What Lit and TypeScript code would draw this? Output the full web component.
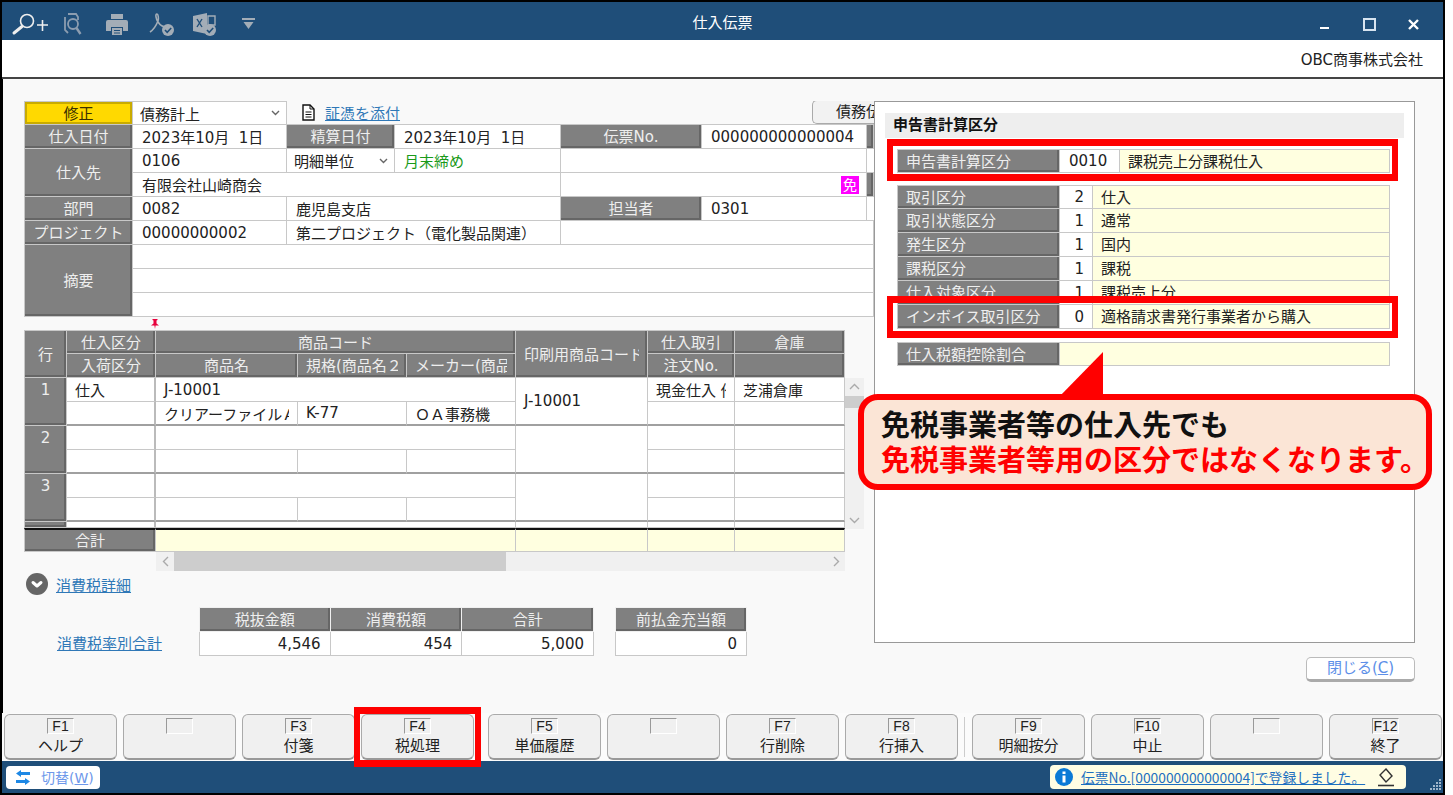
import { html, css, LitElement, svg } from 'lit';
import { customElement } from 'lit/decorators.js';

const fnKeys = [
  [{ k: 'F1', t: 'ヘルプ' }, { k: '', t: '' }, { k: 'F3', t: '付箋' }, { k: 'F4', t: '税処理' }],
  [{ k: 'F5', t: '単価履歴' }, { k: '', t: '' }, { k: 'F7', t: '行削除' }, { k: 'F8', t: '行挿入' }],
  [{ k: 'F9', t: '明細按分' }, { k: 'F10', t: '中止' }, { k: '', t: '' }, { k: 'F12', t: '終了' }],
];

const chevron = html`<svg class="chev" width="9" height="6" viewBox="0 0 9 6"><path d="M1 1l3.500 3.500L8 1" fill="none" stroke="#666" stroke-width="1.400"/></svg>`;

const checkBadge = (cx: number, cy: number) => svg`
  <circle cx=${cx} cy=${cy} r="6" fill="#a3adb7"/>
  <path d="M${cx - 3} ${cy}l2.200 2.400 4-4.400" fill="none" stroke="#1f4e79" stroke-width="1.600"/>`;

@customElement('app-root')
export class AppRoot extends LitElement {
  static styles = css`
    :host {
      display: block;
      position: relative;
      width: 1445px;
      height: 795px;
      font-family: 'DejaVu Sans', 'Noto Sans CJK JP', sans-serif;
      font-size: 15px;
      color: #222;
    }
    * { box-sizing: border-box; }

    .frame {
      height: 795px;
      border: 2px solid #000;
      display: flex;
      flex-direction: column;
      background: #000;
    }
    .title {
      height: 38px;
      flex: none;
      background: #1f4e79;
      color: #fff;
      display: grid;
      grid-template-columns: 1fr auto 1fr;
      align-items: center;
      font-family: 'Noto Sans CJK JP', sans-serif;
    }
    .title svg { display: block; }
    .tools { justify-self: start; }
    .controls { justify-self: end; }
    .company {
      height: 39px;
      flex: none;
      background: #fff;
      border-bottom: 2px solid #444;
      display: flex;
      align-items: center;
      justify-content: flex-end;
      padding-right: 20px;
    }
    .main {
      height: 634px;
      flex: none;
      background: #f9f9f9;
      border-left: 1px solid #000;
      padding: 22px 0 0 21px;
      display: flex;
    }
    .left {
      width: 850px;
      flex: none;
      overflow: hidden;
    }
    .right {
      width: 541px;
      flex: none;
      display: flex;
      flex-direction: column;
    }

    /* shared cells */
    .cell, .lb {
      display: flex;
      align-items: center;
      min-width: 0;
      overflow: hidden;
      border-right: 1px solid #c8c8c8;
      border-bottom: 1px solid #c8c8c8;
    }
    .cell { background: #fff; padding-left: 9px; white-space: pre; }
    .lb {
      background: #808080;
      color: #eee;
      justify-content: center;
      white-space: nowrap;
      padding-bottom: 2px;
      box-shadow: inset -2px -2px 0 #666;
    }
    .l { border-left: 1px solid #c8c8c8; }
    .t { border-top: 1px solid #c8c8c8; }
    .r2 { grid-row: span 2; }
    .r3 { grid-row: span 3; }
    .s2 { grid-column: span 2; }
    .s3 { grid-column: span 3; }
    .s6 { grid-column: span 6; }
    .yellow {
      background: #ffd900;
      color: #3a3000;
      box-shadow: inset 2px 2px 0 #c9ab00, inset -2px -2px 0 #c9ab00;
    }
    .sel { justify-content: space-between; padding: 0 6px 0 7px; }
    .green { color: #1a9a1a; }
    .chev { flex: none; }
    a { color: #2f78b7; text-decoration: underline; }

    /* header form */
    .form {
      display: grid;
      grid-template-columns: 109px 154px 108px 166px 141px 165px 7px;
      grid-auto-rows: 24px;
    }
    .top {
      grid-column: 3 / -1;
      display: flex;
      align-items: center;
      padding-left: 15px;
      gap: 10px;
      border-bottom: 1px solid #c8c8c8;
    }
    .side-btn {
      flex: none;
      width: 62px;
      height: 24px;
      margin-left: auto;
      margin-top: -1px;
      padding-left: 23px;
      background: #f2f2f2;
      border: 1px solid #aaa;
      border-right: 0;
      border-radius: 5px 0 0 5px;
      white-space: nowrap;
      overflow: hidden;
      line-height: 22px;
    }
    .end { justify-content: flex-end; padding-right: 7px; }
    .menzei {
      width: 18px;
      height: 18px;
      background: #ff00ff;
      color: #fff;
      font-size: 14px;
      line-height: 18px;
      text-align: center;
    }

    /* detail table */
    .pin { height: 13px; padding: 2px 0 0 127px; }
    .pin svg { display: block; }
    .table-wrap { display: flex; }
    .table {
      width: 821px;
      display: grid;
      grid-template-columns: 43px 89px 142px 109px 109px 132px 87px 110px;
      grid-template-rows: repeat(8, 24px) 6px 24px;
    }
    .table .lb.tp { align-items: flex-start; padding-top: 3px; }
    .table .cell { padding-left: 8px; }
    .table .cut { padding: 0 8px; justify-content: flex-start; }
    .table .lb.cut { padding-bottom: 2px; }
    .cut > span { display: block; flex: 1; min-width: 0; overflow: hidden; }
    .gb { border-bottom: 2px solid #a0a0a0; }
    .thick { border-right: 2px solid #bbb; }
    .total { border-top: 2px solid #111; background: #ffffe0; }
    .lb.total { background: #808080; }
    .vs {
      width: 19px;
      height: 151px;
      margin-top: 48px;
      background: #f0f0f0;
      display: flex;
      flex-direction: column;
      align-items: center;
      justify-content: space-between;
      padding: 5px 0;
    }
    .vs-thumb { width: 19px; height: 12px; background: #cdcdcd; margin-top: 6px; margin-bottom: auto; }
    .hs {
      margin-left: 132px;
      width: 689px;
      height: 19px;
      background: #f0f0f0;
      display: flex;
      align-items: center;
    }
    .hs-arrow { width: 18px; flex: none; display: flex; justify-content: center; }
    .hs-thumb { width: 332px; height: 19px; background: #cdcdcd; flex: none; }
    .hs-arrow.end-a { margin-left: auto; }

    /* tax */
    .tax-head { display: flex; align-items: center; height: 22px; margin: 2px 0 0 2px; gap: 8px; }
    .tax-row { display: flex; margin-top: 12px; padding-left: 33px; }
    .tax-link { width: 142px; align-self: flex-end; height: 24px; line-height: 24px; }
    .tax-a, .tax-b { display: grid; grid-template-rows: 25px 24px; }
    .tax-a { width: 395px; grid-template-columns: repeat(3, 1fr); }
    .tax-b { width: 132px; margin-left: 21px; }
    .num { justify-content: flex-end; padding-right: 9px; }
    .tax-row .lb { border-color: #f0f0f0; }

    /* tax panel */
    .panel {
      height: 542px;
      background: #fff;
      border: 1px solid #999;
      padding: 11px 10px 0;
    }
    .panel-head {
      height: 25px;
      background: #eee;
      font-weight: bold;
      color: #111;
      line-height: 25px;
      padding-left: 8px;
    }
    .prow {
      width: 493px;
      margin-left: 12px;
      display: grid;
      grid-template-rows: 24px;
    }
    .prow.wide { grid-template-columns: 163px 60px 1fr; margin-top: 11px; }
    .prow.narrow { grid-template-columns: 163px 33px 1fr; }
    .prow.only { grid-template-columns: 163px 1fr; margin-top: 13px; }
    .group { margin-top: 12px; }
    .prow .lb { justify-content: flex-start; padding-left: 8px; }
    .prow .cell.code { justify-content: flex-end; padding: 0 8px 0 0; }
    .cream { background: #ffffe0; padding-left: 8px; padding-bottom: 2px; }
    .close {
      align-self: flex-end;
      width: 109px;
      height: 25px;
      margin-top: 14px;
      background: #fff;
      border: 1px solid #bbb;
      border-bottom: 3px solid #aaa;
      border-radius: 5px;
      color: #5d8fe8;
      text-align: center;
      line-height: 21px;
    }
    u { text-decoration: underline; }

    /* function keys */
    .fnbar {
      height: 48px;
      flex: none;
      background: #fbfbfb;
      display: flex;
      gap: 6px;
      padding: 1px 0 0 2px;
    }
    .fn {
      width: 113px;
      height: 46px;
      flex: none;
      background: #f0f0f0;
      border: 1px solid #aaa;
      border-bottom: 2px solid #999;
      border-radius: 6px;
      display: flex;
      flex-direction: column;
      align-items: center;
      padding-top: 3px;
    }
    .key {
      width: 27px;
      height: 16px;
      border: 1px solid #fff;
      border-top-color: #999;
      border-left-color: #999;
      font-family: 'Liberation Sans', sans-serif;
      font-size: 14px;
      line-height: 15px;
      text-align: center;
    }
    .fn-label { line-height: 24px; font-size: 15px; color: #222; }
    .sep { width: 2px; flex: none; height: 40px; margin-top: 3px; border-left: 1px solid #ccc; }

    /* status bar */
    .status {
      height: 32px;
      flex: none;
      background: #1f4e79;
      display: flex;
      align-items: center;
      padding: 0 4px;
      position: relative;
    }
    .switch {
      width: 94px;
      height: 23px;
      background: #fff;
      border-radius: 4px;
      color: #6d97ea;
      display: flex;
      align-items: center;
      padding-left: 9px;
      gap: 10px;
      font-size: 14px;
    }
    .msg {
      width: 356px;
      height: 24px;
      margin-left: auto;
      margin-right: 33px;
      background: #fffde3;
      border-radius: 4px;
      display: flex;
      align-items: center;
      padding-left: 5px;
      gap: 8px;
      font-family: 'Noto Sans CJK JP', sans-serif;
      font-size: 13.8px;
    }
    .msg a { color: #1d6fc0; }
    .msg svg { flex: none; display: block; }
    .msg .eraser { margin-left: 4px; }
    .grip { position: absolute; right: 1px; bottom: 2px; display: block; }

    /* annotations lying over the screen */
    .mark { position: absolute; border: solid #f00; border-width: 7px 6px; pointer-events: none; }
    .m1 { left: 887px; top: 139px; width: 511px; height: 42px; }
    .m2 { left: 887px; top: 296px; width: 511px; height: 42px; }
    .m3 { left: 354px; top: 707px; width: 127px; height: 60px; }
    .tail { position: absolute; left: 1056px; top: 352px; display: block; }
    .callout {
      position: absolute;
      left: 858px;
      top: 394px;
      width: 574px;
      height: 96px;
      background: #fbe5d6;
      border: 6px solid #f00;
      border-radius: 20px;
      padding: 0 0 2px 17px;
      display: flex;
      flex-direction: column;
      justify-content: center;
      font-family: 'Noto Sans CJK JP', sans-serif;
      font-weight: bold;
      font-size: 29px;
      line-height: 35px;
      color: #111;
      white-space: nowrap;
    }
    .callout .red { color: #f00; }
  `;

  renderTools() {
    const dim = '#a3adb7';
    return html`<svg class="tools" width="262" height="38" viewBox="2 2 262 38">
      <circle cx="27" cy="21" r="6.500" fill="none" stroke="#eee" stroke-width="1.600"/>
      <path d="M22 26.500l-8 6.500" stroke="#eee" stroke-width="3" stroke-linecap="round"/>
      <path d="M37 25h11M42.500 20v11" stroke="#eee" stroke-width="1.600"/>
      <path d="M68 14h8l2 3v3M65 17v13l3 3" fill="none" stroke="#8c9db0" stroke-width="1.800"/>
      <circle cx="73" cy="24" r="5" fill="none" stroke="#8c9db0" stroke-width="1.800"/>
      <path d="M76.500 28l4 6" stroke="#8c9db0" stroke-width="2.400"/>
      <path d="M111 14h12v5h-12z" fill=${dim}/>
      <path d="M108 20h18a2 2 0 0 1 2 2v9h-5v-4h-12v4h-5v-9a2 2 0 0 1 2-2z" fill=${dim}/>
      <path d="M112 28h10v7h-10z" fill=${dim}/>
      <path d="M114 30.500h6M114 33h6" stroke="#1f4e79"/>
      <path d="M150 32c3-2 6-6 8-11 1-3 0-7-1-7-2 0-1 5 1 8 2 3 5 5 8 5" fill="none" stroke=${dim} stroke-width="1.600"/>
      ${checkBadge(168, 30)}
      <path d="M193 16l14-3v21l-14-3z" fill=${dim}/>
      <path d="M197 19l5 8M202 19l-5 8" stroke="#1f4e79" stroke-width="1.400"/>
      <path d="M208 16h7v9h-7z" fill="none" stroke=${dim} stroke-width="1.400"/>
      ${checkBadge(210, 30)}
      <path d="M242 18h13v2h-13z" fill=${dim}/>
      <path d="M243.500 22h10l-5 7z" fill=${dim}/>
    </svg>`;
  }

  renderControls() {
    return html`<svg class="controls" width="140" height="38" viewBox="1305 2 140 38">
      <path d="M1322 28h9" stroke="#fff" stroke-width="2"/>
      <path d="M1366 19h11v11h-11z" fill="none" stroke="#d7e4f0" stroke-width="2"/>
      <path d="M1411 20l9 9M1420 20l-9 9" stroke="#fff" stroke-width="2.400"/>
    </svg>`;
  }

  renderForm() {
    return html`<div class="form">
      <div class="lb l t yellow">修正</div>
      <div class="cell t sel">債務計上${chevron}</div>
      <div class="top">
        <svg width="13" height="17" viewBox="0 0 13 17">
          <path d="M1 1h7l4 4v11H1z" fill="#fff" stroke="#111" stroke-width="1.400"/>
          <path d="M8 1v4h4M3.500 8h6M3.500 10.500h6M3.500 13h6" fill="none" stroke="#111"/>
        </svg>
        <a>証憑を添付</a>
        <div class="side-btn">債務伝票</div>
      </div>

      <div class="lb l">仕入日付</div>
      <div class="cell">2023年10月  1日</div>
      <div class="lb">精算日付</div>
      <div class="cell">2023年10月  1日</div>
      <div class="lb">伝票No.</div>
      <div class="cell">000000000000004</div>
      <div class="lb"></div>

      <div class="lb l r2">仕入先</div>
      <div class="cell">0106</div>
      <div class="cell sel">明細単位${chevron}</div>
      <div class="cell green">月末締め</div>
      <div class="cell s2"></div>
      <div class="cell"></div>

      <div class="cell s3">有限会社山崎商会</div>
      <div class="cell s2 end"><div class="menzei">免</div></div>
      <div class="lb"></div>

      <div class="lb l">部門</div>
      <div class="cell">0082</div>
      <div class="cell s2">鹿児島支店</div>
      <div class="lb">担当者</div>
      <div class="cell">0301</div>
      <div class="cell"></div>

      <div class="lb l">プロジェクト</div>
      <div class="cell">00000000002</div>
      <div class="cell s2">第二プロジェクト（電化製品関連）</div>
      <div class="cell s3"></div>

      <div class="lb l r3">摘要</div>
      <div class="cell s6"></div>
      <div class="cell s6"></div>
      <div class="cell s6"></div>
    </div>`;
  }

  renderEmptyLine(n: string) {
    return html`
      <div class="lb l r2 tp">${n}</div>
      <div class="cell thick"></div>
      <div class="cell s3"></div>
      <div class="cell r2 gb"></div>
      <div class="cell"></div>
      <div class="cell"></div>
      <div class="cell thick gb"></div>
      <div class="cell gb"></div>
      <div class="cell gb"></div>
      <div class="cell gb"></div>
      <div class="cell gb"></div>
      <div class="cell gb"></div>`;
  }

  renderTable() {
    return html`<div class="table-wrap">
      <div class="table">
        <div class="lb l t r2">行</div>
        <div class="lb t">仕入区分</div>
        <div class="lb t s3">商品コード</div>
        <div class="lb t r2 cut"><span>印刷用商品コード</span></div>
        <div class="lb t">仕入取引</div>
        <div class="lb t">倉庫</div>
        <div class="lb">入荷区分</div>
        <div class="lb">商品名</div>
        <div class="lb cut"><span>規格(商品名２</span></div>
        <div class="lb cut"><span>メーカー(商品名</span></div>
        <div class="lb">注文No.</div>
        <div class="lb"></div>

        <div class="lb l r2 tp">1</div>
        <div class="cell thick">仕入</div>
        <div class="cell s3">J-10001</div>
        <div class="cell r2 gb">J-10001</div>
        <div class="cell cut"><span>現金仕入 他</span></div>
        <div class="cell">芝浦倉庫</div>
        <div class="cell thick gb"></div>
        <div class="cell gb cut"><span>クリアーファイルＡ４</span></div>
        <div class="cell gb">K-77</div>
        <div class="cell gb">ＯＡ事務機</div>
        <div class="cell gb"></div>
        <div class="cell gb"></div>

        ${this.renderEmptyLine('2')}
        ${this.renderEmptyLine('3')}

        <div class="lb l"></div>
        <div class="cell thick"></div>
        <div class="cell s3"></div>
        <div class="cell"></div>
        <div class="cell"></div>
        <div class="cell"></div>

        <div class="lb l s2 total">合計</div>
        <div class="cell s3 total"></div>
        <div class="cell total"></div>
        <div class="cell total"></div>
        <div class="cell total"></div>
      </div>
      <div class="vs">
        <svg width="11" height="7" viewBox="0 0 11 7"><path d="M1 6l4.500-4.500L10 6" fill="none" stroke="#aaa" stroke-width="1.400"/></svg>
        <div class="vs-thumb"></div>
        <svg width="11" height="7" viewBox="0 0 11 7"><path d="M1 1l4.500 4.500L10 1" fill="none" stroke="#aaa" stroke-width="1.400"/></svg>
      </div>
    </div>
    <div class="hs">
      <div class="hs-arrow"><svg width="7" height="11" viewBox="0 0 7 11"><path d="M6 1L1.500 5.500 6 10" fill="none" stroke="#aaa" stroke-width="1.400"/></svg></div>
      <div class="hs-thumb"></div>
      <div class="hs-arrow end-a"><svg width="7" height="11" viewBox="0 0 7 11"><path d="M1 1l4.500 4.500L1 10" fill="none" stroke="#aaa" stroke-width="1.400"/></svg></div>
    </div>`;
  }

  renderTax() {
    return html`
      <div class="tax-head">
        <svg width="22" height="22" viewBox="0 0 22 22">
          <circle cx="11" cy="11" r="11" fill="#666"/>
          <path d="M7 9.500l4 3.500 4-3.500" fill="none" stroke="#fff" stroke-width="3" stroke-linecap="round" stroke-linejoin="round"/>
        </svg>
        <a>消費税詳細</a>
      </div>
      <div class="tax-row">
        <a class="tax-link">消費税率別合計</a>
        <div class="tax-a">
          <div class="lb l t">税抜金額</div>
          <div class="lb t">消費税額</div>
          <div class="lb t">合計</div>
          <div class="cell l num">4,546</div>
          <div class="cell num">454</div>
          <div class="cell num">5,000</div>
        </div>
        <div class="tax-b">
          <div class="lb l t">前払金充当額</div>
          <div class="cell l num">0</div>
        </div>
      </div>`;
  }

  renderPanelRow(label: string, code: string, text: string, top = false) {
    return html`<div class="prow narrow">
      <div class="lb l ${top ? 't' : ''}">${label}</div>
      <div class="cell code ${top ? 't' : ''}">${code}</div>
      <div class="cell cream ${top ? 't' : ''}">${text}</div>
    </div>`;
  }

  renderPanel() {
    return html`<div class="panel">
      <div class="panel-head">申告書計算区分</div>
      <div class="prow wide">
        <div class="lb l t">申告書計算区分</div>
        <div class="cell t">0010</div>
        <div class="cell t cream">課税売上分課税仕入</div>
      </div>
      <div class="group">
        ${this.renderPanelRow('取引区分', '2', '仕入', true)}
        ${this.renderPanelRow('取引状態区分', '1', '通常')}
        ${this.renderPanelRow('発生区分', '1', '国内')}
        ${this.renderPanelRow('課税区分', '1', '課税')}
        ${this.renderPanelRow('仕入対象区分', '1', '課税売上分')}
        ${this.renderPanelRow('インボイス取引区分', '0', '適格請求書発行事業者から購入')}
      </div>
      <div class="prow only">
        <div class="lb l t">仕入税額控除割合</div>
        <div class="cell t cream"></div>
      </div>
    </div>`;
  }

  renderFnKeys() {
    return fnKeys.map((group, i) => html`
      ${i > 0 ? html`<div class="sep"></div>` : ''}
      ${group.map((b) => html`<div class="fn"><div class="key">${b.k}</div><div class="fn-label">${b.t}</div></div>`)}
    `);
  }

  render() {
    return html`
      <div class="frame">
        <div class="title">
          ${this.renderTools()}
          <div>仕入伝票</div>
          ${this.renderControls()}
        </div>
        <div class="company">OBC商事株式会社</div>
        <div class="main">
          <div class="left">
            ${this.renderForm()}
            <div class="pin">
              <svg width="8" height="10" viewBox="0 0 8 10"><path d="M1.500 0h5v1l-1 .5v3L8 6.500H4.600L4 10l-.6-3.500H0L2.500 4.500v-3l-1-.5z" fill="#e8003c"/></svg>
            </div>
            ${this.renderTable()}
            ${this.renderTax()}
          </div>
          <div class="right">
            ${this.renderPanel()}
            <div class="close">閉じる(<u>C</u>)</div>
          </div>
        </div>
        <div class="fnbar">${this.renderFnKeys()}</div>
        <div class="status">
          <div class="switch">
            <svg width="16" height="17" viewBox="0 0 16 17">
              <path d="M6 1L1 4.500 6 8V6h9V3H6zM10 9l5 3.500L10 16v-2H1v-3h9z" fill="#1e88e5"/>
            </svg>
            <span>切替(<u>W</u>)</span>
          </div>
          <div class="msg">
            <svg width="18" height="18" viewBox="0 0 18 18">
              <circle cx="9" cy="9" r="9" fill="#0b7ad6"/>
              <path d="M7.500 3.500h3v2.500h-3zM7.500 7.500h3v7h-3z" fill="#fff"/>
            </svg>
            <a>伝票No.[000000000000004]で登録しました。</a>
            <svg class="eraser" width="18" height="19" viewBox="0 0 18 19">
              <path d="M9 1l6 7-6 6-6-7z" fill="#fffde3" stroke="#333" stroke-width="1.400"/>
              <path d="M1 17.500h16" stroke="#333" stroke-width="1.600"/>
            </svg>
          </div>
          <svg class="grip" width="12" height="12" viewBox="0 0 12 12" fill="#9fb6cc">
            <path d="M9 0h2v2H9zM6 3h2v2H6zM9 3h2v2H9zM3 6h2v2H3zM6 6h2v2H6zM9 6h2v2H9zM0 9h2v2H0zM3 9h2v2H3zM6 9h2v2H6zM9 9h2v2H9z"/>
          </svg>
        </div>
      </div>

      <div class="mark m1"></div>
      <div class="mark m2"></div>
      <div class="mark m3"></div>
      <svg class="tail" width="48" height="46" viewBox="0 0 48 46"><path d="M47 0v46H2z" fill="#f00"/></svg>
      <div class="callout">
        <div>免税事業者等の仕入先でも</div>
        <div class="red">免税事業者等用の区分ではなくなります。</div>
      </div>
    `;
  }
}

declare global {
  interface HTMLElementTagNameMap {
    'app-root': AppRoot;
  }
}
